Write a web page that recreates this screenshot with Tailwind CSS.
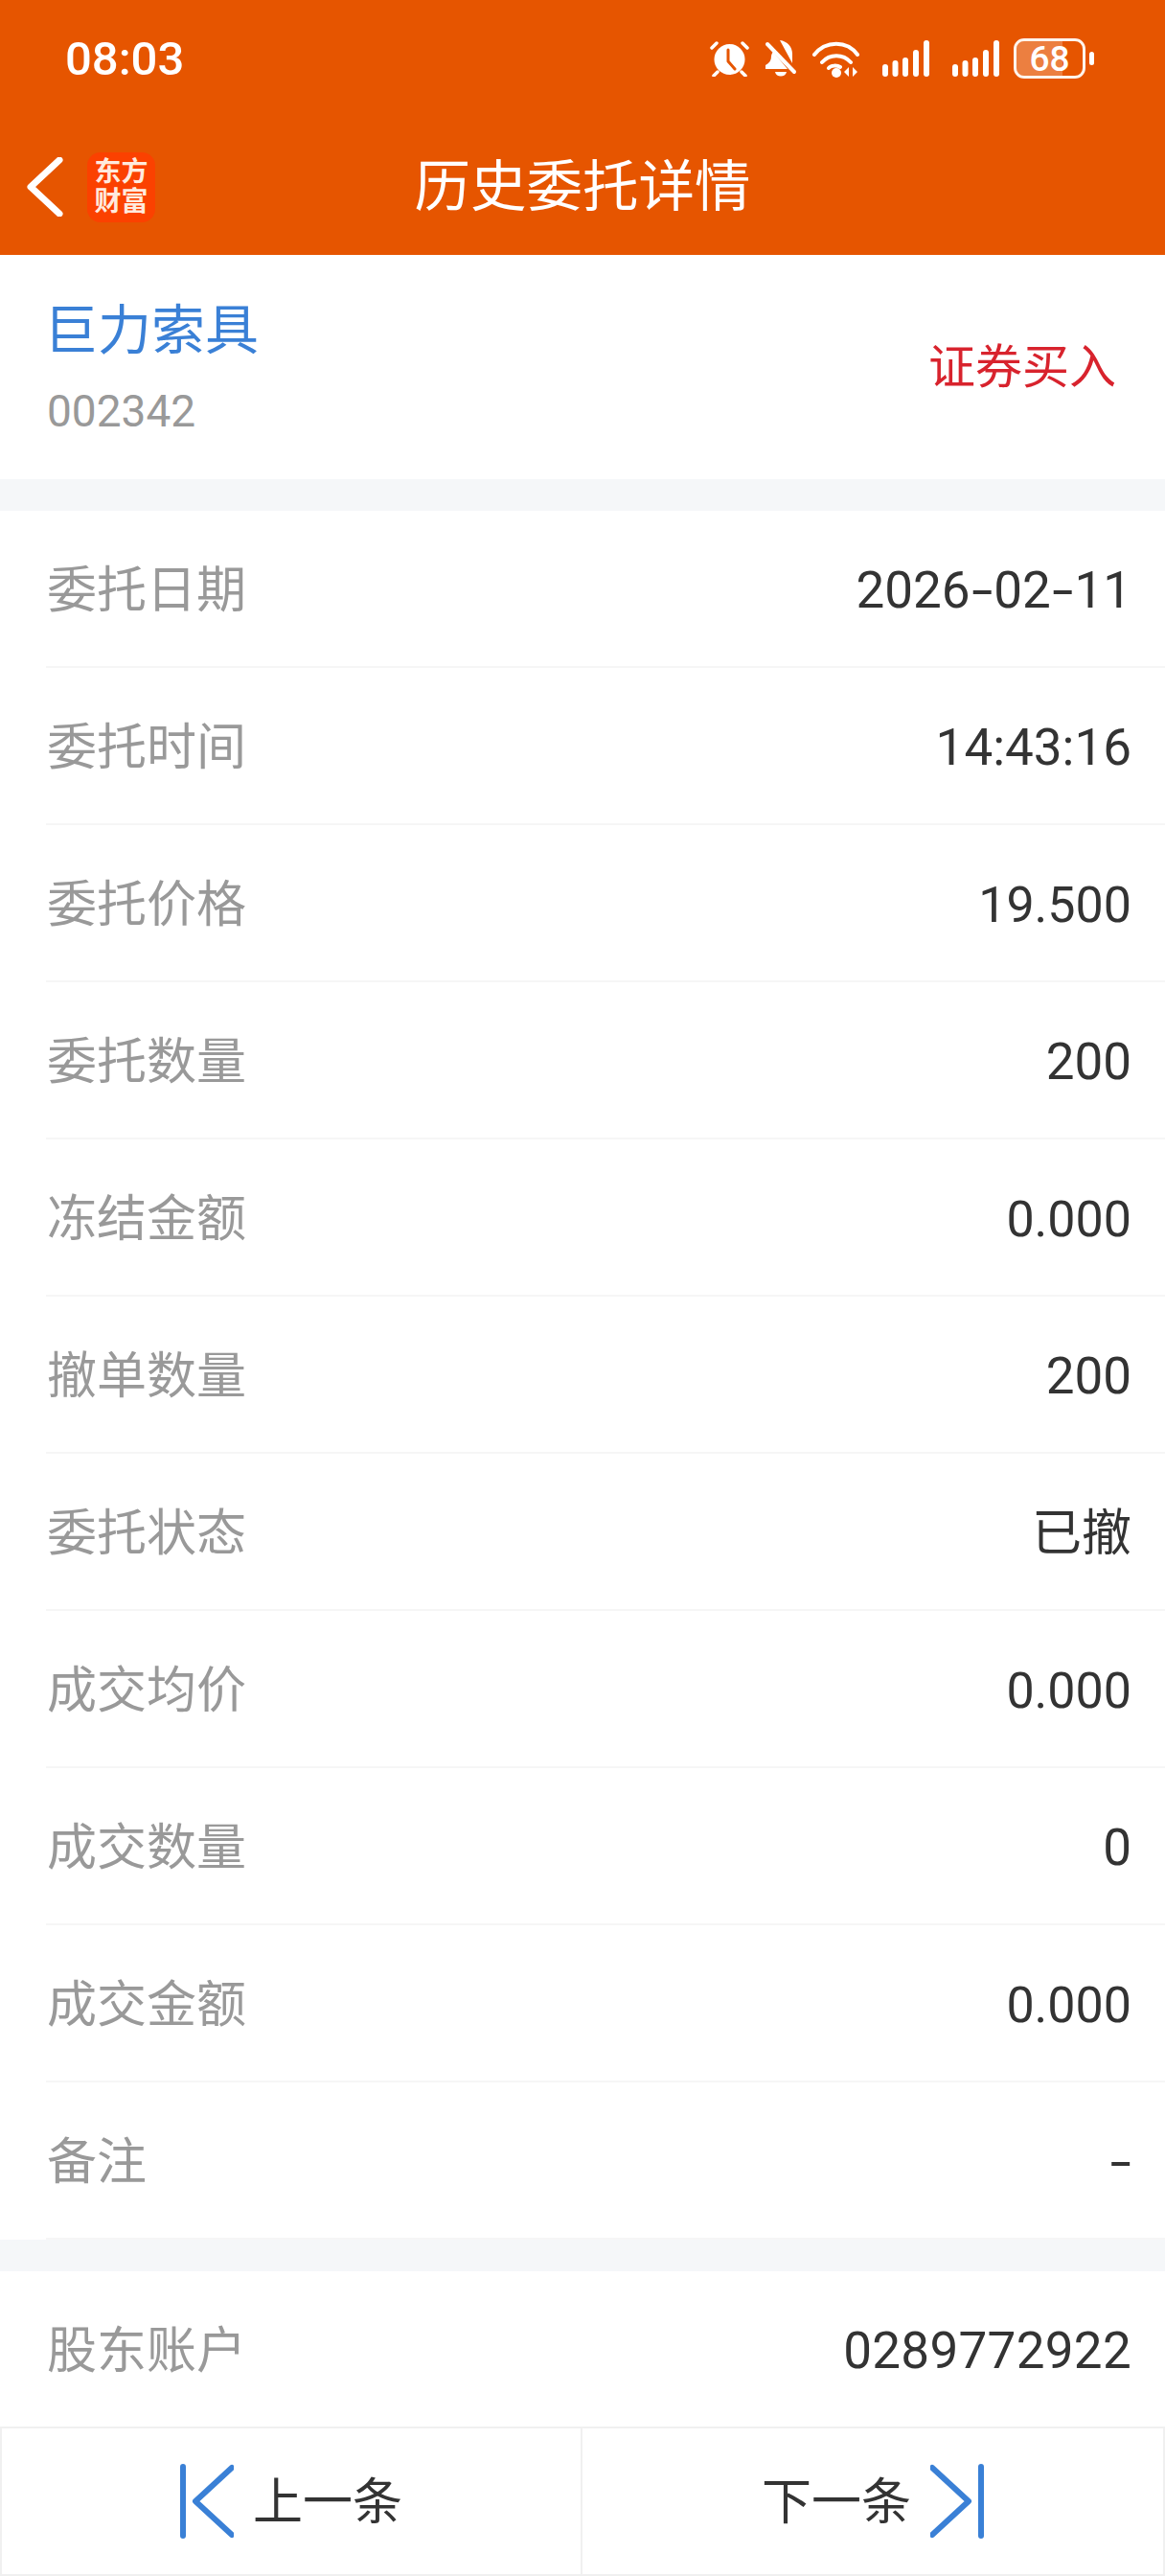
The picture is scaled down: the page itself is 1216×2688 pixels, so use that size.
<!DOCTYPE html>
<html lang="zh">
<head>
<meta charset="utf-8">
<script src="https://cdn.jsdelivr.net/npm/@tailwindcss/browser@4"></script>
<title>历史委托详情</title>
</head>
<body class="m-0 bg-white font-['Roboto','Noto_Sans_CJK_SC',sans-serif]">
<div class="w-[1216px] h-[2688px] flex flex-col overflow-hidden bg-[#f5f7f9]">

  <div class="bg-[#e65500] text-white shrink-0">
    <div class="h-[124px] flex items-center justify-between pl-[68px] pr-[74px] pb-[2px]">
      <span class="text-[49px] font-medium leading-none">08:03</span>
      <div class="flex items-center">
        <svg class="w-[41px] h-[38px]" viewBox="0 0 41 38" fill="none"><circle cx="20.5" cy="20" r="16" fill="#fff"/><path d="M2 8 7 3M39 8 34 3M8 33 4 37M33 33 37 37" stroke="#fff" stroke-width="3.5" stroke-linecap="round"/><path d="M19 10v12l7 8" stroke="#e65500" stroke-width="3" stroke-linecap="round" stroke-linejoin="round"/></svg>
        <svg class="w-[34px] h-[38px] ml-[16px]" viewBox="0 0 34 38" fill="none"><path d="M3 4 31 33" stroke="#fff" stroke-width="4" stroke-linecap="round"/><path d="M16 0c8 1 13 7 13 14v10ZM9 12 24 30H1v-4c4-2 6-5 6-9 0-2 1-4 2-5ZM11 33h12c-1 6-11 6-12 0Z" fill="#fff"/></svg>
        <svg class="w-[49px] h-[39px] ml-[16px]" viewBox="0 0 49 39" fill="none"><path d="M2 15C14 0 36 0 47 15M10 23c8-9 22-9 30 0M17 29c2-3 9-3 12-1" stroke="#fff" stroke-width="4" stroke-linecap="round"/><circle cx="25" cy="34" r="5" fill="#fff"/><path d="M38 28v10l-5-5ZM42 28v10l5-5Z" fill="#fff"/></svg>
        <svg class="w-[49px] h-[38px] ml-[24px]" viewBox="0 0 49 38" fill="#fff"><rect x="0" y="25" width="6" height="13" rx="3"/><rect x="10.5" y="21" width="6" height="17" rx="3"/><rect x="21" y="18" width="6" height="20" rx="3"/><rect x="32" y="10" width="6" height="28" rx="3"/><rect x="43" y="0" width="6" height="38" rx="3"/></svg>
        <svg class="w-[49px] h-[38px] ml-[24px]" viewBox="0 0 49 38" fill="#fff"><rect x="0" y="25" width="6" height="13" rx="3"/><rect x="10.5" y="21" width="6" height="17" rx="3"/><rect x="21" y="18" width="6" height="20" rx="3"/><rect x="32" y="10" width="6" height="28" rx="3"/><rect x="43" y="0" width="6" height="38" rx="3"/></svg>
        <div class="relative w-[75px] h-[42px] ml-[15px] rounded-[11px] border-[3px] border-[#fff4ec] overflow-hidden flex items-center justify-center">
          <div class="absolute left-0 top-0 bottom-0 w-[48px] bg-white/25"></div>
          <span class="relative text-[37px] font-medium leading-none">68</span>
        </div>
        <div class="w-[5px] h-[14px] ml-[4px] rounded-full bg-white"></div>
      </div>
    </div>
    <div class="h-[142px] grid grid-cols-[1fr_auto_1fr] items-center">
      <div class="flex items-center pl-[28px]">
        <svg class="w-[38px] h-[62px]" viewBox="0 0 38 62" fill="none"><path d="M34 3 4 31l30 28" stroke="#fff" stroke-width="7" stroke-linecap="round" stroke-linejoin="round"/></svg>
        <div class="w-[71px] h-[73px] ml-[25px] rounded-[14px] bg-[#fb4100] flex flex-col items-center justify-center text-[#ffeade] text-[28px] leading-[31px] font-bold">
          <span>东方</span><span>财富</span>
        </div>
      </div>
      <h1 class="text-[58.5px] font-normal leading-none">历史委托详情</h1>
      <div></div>
    </div>
  </div>

  <div class="h-[234px] bg-white flex items-center justify-between pl-[49px] pr-[51px] shrink-0">
    <div class="flex flex-col">
      <span class="text-[56px] leading-[56px] text-[#3a80d6] mb-[36px] ml-[-3px]">巨力索具</span>
      <span class="text-[46px] leading-[40px] text-[#999999]">002342</span>
    </div>
    <span class="text-[49px] leading-none text-[#d8232d]">证券买入</span>
  </div>

  <div class="h-[33px] shrink-0"></div>

  <div class="bg-white shrink-0 pl-[48px] text-[52px]">
    <div class="h-[164px] pt-[6px] border-b-2 border-[#f6f6f6] flex items-center justify-between pr-[35px]"><span class="text-[#999999] ml-[1px]">委托日期</span><span class="text-[53px] text-[#333333]">2026<span class="inline-block mx-[5px] scale-x-[1.5]">-</span>02<span class="inline-block mx-[5px] scale-x-[1.5]">-</span>11</span></div>
    <div class="h-[164px] pt-[6px] border-b-2 border-[#f6f6f6] flex items-center justify-between pr-[35px]"><span class="text-[#999999] ml-[1px]">委托时间</span><span class="text-[53px] text-[#333333]">14:43:16</span></div>
    <div class="h-[164px] pt-[6px] border-b-2 border-[#f6f6f6] flex items-center justify-between pr-[35px]"><span class="text-[#999999] ml-[1px]">委托价格</span><span class="text-[52px] text-[#333333]">19.500</span></div>
    <div class="h-[164px] pt-[6px] border-b-2 border-[#f6f6f6] flex items-center justify-between pr-[35px]"><span class="text-[#999999] ml-[1px]">委托数量</span><span class="text-[53px] text-[#333333]">200</span></div>
    <div class="h-[164px] pt-[6px] border-b-2 border-[#f6f6f6] flex items-center justify-between pr-[35px]"><span class="text-[#999999] ml-[1px]">冻结金额</span><span class="text-[52px] text-[#333333]">0.000</span></div>
    <div class="h-[164px] pt-[6px] border-b-2 border-[#f6f6f6] flex items-center justify-between pr-[35px]"><span class="text-[#999999] ml-[1px]">撤单数量</span><span class="text-[53px] text-[#333333]">200</span></div>
    <div class="h-[164px] pt-[6px] border-b-2 border-[#f6f6f6] flex items-center justify-between pr-[35px]"><span class="text-[#999999] ml-[1px]">委托状态</span><span class="text-[#333333]">已撤</span></div>
    <div class="h-[164px] pt-[6px] border-b-2 border-[#f6f6f6] flex items-center justify-between pr-[35px]"><span class="text-[#999999] ml-[1px]">成交均价</span><span class="text-[52px] text-[#333333]">0.000</span></div>
    <div class="h-[164px] pt-[6px] border-b-2 border-[#f6f6f6] flex items-center justify-between pr-[35px]"><span class="text-[#999999] ml-[1px]">成交数量</span><span class="text-[53px] text-[#333333]">0</span></div>
    <div class="h-[164px] pt-[6px] border-b-2 border-[#f6f6f6] flex items-center justify-between pr-[35px]"><span class="text-[#999999] ml-[1px]">成交金额</span><span class="text-[52px] text-[#333333]">0.000</span></div>
    <div class="h-[164px] pt-[6px] border-b-2 border-[#f6f6f6] flex items-center justify-between pr-[35px]"><span class="text-[#999999] ml-[1px]">备注</span><span class="text-[53px] text-[#333333] inline-block origin-right scale-x-[1.5]">-</span></div>
  </div>

  <div class="h-[33px] shrink-0"></div>

  <div class="h-[162px] pt-[6px] bg-white shrink-0 pl-[48px] text-[52px] flex items-center justify-between pr-[35px]"><span class="text-[#999999] ml-[1px]">股东账户</span><span class="text-[53px] tracking-[0.3px] text-[#333333]">0289772922</span></div>

  <div class="flex-1 grid grid-cols-2 bg-white text-[52px] text-[#333333]">
    <button class="border-2 border-[#f0f0f0] flex items-center justify-center">
      <svg class="w-[56px] h-[78px] mr-[20px]" viewBox="0 0 56 78" fill="none"><path d="M3 3V75M54 4 16 39l38 35" stroke="#3a80d6" stroke-width="6" stroke-linecap="round" stroke-linejoin="round"/></svg>
      <span class="pt-[3px]">上一条</span>
    </button>
    <button class="border-2 border-l-0 border-[#f0f0f0] flex items-center justify-center">
      <span class="pt-[3px]">下一条</span>
      <svg class="w-[56px] h-[78px] ml-[20px]" viewBox="0 0 56 78" fill="none"><path d="M53 3V75M2 4l38 35L2 74" stroke="#3a80d6" stroke-width="6" stroke-linecap="round" stroke-linejoin="round"/></svg>
    </button>
  </div>
</div>
</body>
</html>
